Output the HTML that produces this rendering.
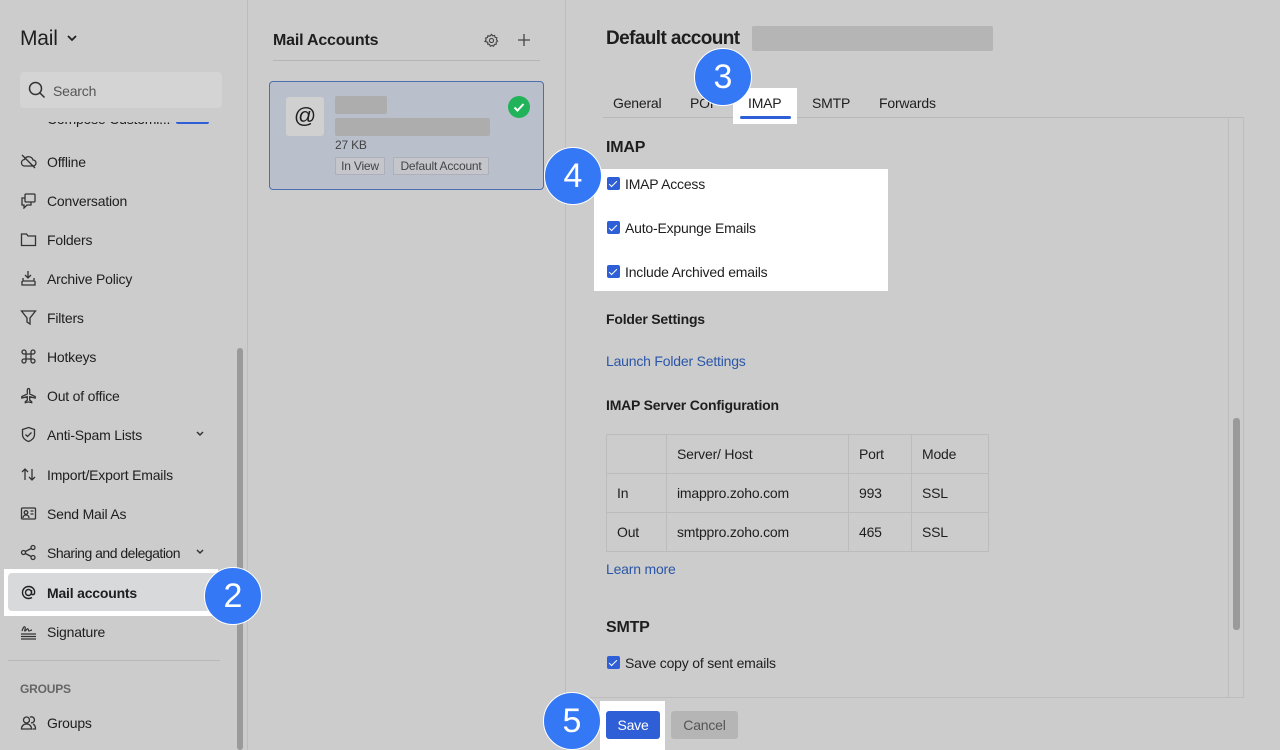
<!DOCTYPE html>
<html><head><style>
*{box-sizing:border-box;margin:0;padding:0}
body{width:1280px;height:750px;background:#cccccc;font-family:"Liberation Sans",sans-serif;color:#1e1e1e;position:relative;overflow:hidden;letter-spacing:-0.2px}
.a{position:absolute}
.t{position:absolute;white-space:nowrap;font-size:14px;line-height:1}
.it{position:absolute;left:0;width:230px;height:39px}
.it svg{position:absolute;left:20px;top:11px}
.it span{position:absolute;left:47px;top:12px;font-size:14px;white-space:nowrap}
.circ{position:absolute;width:58px;height:58px;border-radius:50%;background:#3478f6;border:1.5px solid #fff;color:#fff;font-size:34px;text-align:center;line-height:56px;letter-spacing:0}
.cb{position:absolute;width:13px;height:13px;background:#2f5fd6;border-radius:2px}
.cb:after{content:"";position:absolute;left:4px;top:1.5px;width:3px;height:7px;border:solid #fff;border-width:0 1.6px 1.6px 0;transform:rotate(45deg)}
td{border:1px solid #bcbcbc;font-size:14px;padding-left:10px;height:39px}
</style></head><body>
<!-- sidebar -->
<div class="t" style="left:20px;top:28px;font-size:21px;">Mail</div>
<svg class="a" style="left:66px;top:33px" width="12" height="10" viewBox="0 0 12 10"><path d="M2 3l4 4 4-4" stroke="#222" stroke-width="1.8" fill="none"/></svg>
<div class="a" style="left:20px;top:72px;width:202px;height:36px;background:#d4d4d4;border-radius:4px"></div>
<svg class="a" style="left:28px;top:81px" width="18" height="18" viewBox="0 0 18 18"><circle cx="7.5" cy="7.5" r="6" stroke="#333" stroke-width="1.5" fill="none"/><path d="M12 12l4.5 4.5" stroke="#333" stroke-width="1.5"/></svg>
<div class="t" style="left:53px;top:84px;color:#555">Search</div>
<div class="a" style="left:0;top:122px;width:236px;height:628px;overflow:hidden">
 <div class="it" style="top:-23px"><span>Compose Customi...</span><div class="a" style="left:176px;top:14px;width:33px;height:11px;background:#2f5fd6;border-radius:2px"></div></div>
 <div class="it" style="top:20px"><svg width="17" height="17" viewBox="0 0 17 17" fill="none" stroke="#333" stroke-width="1.3"><path d="M4 13h9a3 3 0 0 0 0-6 4.5 4.5 0 0 0-8.5-.5A3.3 3.3 0 0 0 4 13z"/><path d="M2 2l13 13"/></svg><span>Offline</span></div>
 <div class="it" style="top:59px"><svg width="17" height="17" viewBox="0 0 17 17" fill="none" stroke="#333" stroke-width="1.3"><rect x="5" y="2" width="10" height="8" rx="1"/><path d="M5 6H2v7h2v3l3-3h4v-3"/></svg><span>Conversation</span></div>
 <div class="it" style="top:98px"><svg width="17" height="17" viewBox="0 0 17 17" fill="none" stroke="#333" stroke-width="1.3"><path d="M1.5 3h5l1.5 2h7.5v9.5h-14z"/></svg><span>Folders</span></div>
 <div class="it" style="top:137px"><svg width="17" height="17" viewBox="0 0 17 17" fill="none" stroke="#333" stroke-width="1.3"><path d="M8 1v7M5 5l3 3 3-3M3 8v3h11V8M2 11v4h13v-4"/></svg><span>Archive Policy</span></div>
 <div class="it" style="top:176px"><svg width="17" height="17" viewBox="0 0 17 17" fill="none" stroke="#333" stroke-width="1.3"><path d="M1.5 2h14l-5.5 7v6l-3-2V9z"/></svg><span>Filters</span></div>
 <div class="it" style="top:215px"><svg width="17" height="17" viewBox="0 0 17 17" fill="none" stroke="#333" stroke-width="1.3"><path d="M6 6V4a2 2 0 1 0-2 2h9a2 2 0 1 0-2-2v9a2 2 0 1 0 2-2H4a2 2 0 1 0 2 2z"/></svg><span>Hotkeys</span></div>
 <div class="it" style="top:254px"><svg width="17" height="17" viewBox="0 0 17 17" fill="none" stroke="#333" stroke-width="1.3"><path d="M8.5 1.5c1 0 1.2 1 1.2 2V7l5.5 2.5v1.5l-5.5-1.3v3.5l2 1.5v1l-3.2-.8-3.2.8v-1l2-1.5V9.7l-5.5 1.3V9.5L7.3 7V3.5c0-1 .2-2 1.2-2z"/></svg><span>Out of office</span></div>
 <div class="it" style="top:293px"><svg width="17" height="17" viewBox="0 0 17 17" fill="none" stroke="#333" stroke-width="1.3"><path d="M8.5 1.5l6 2v5c0 3.5-3 6-6 7-3-1-6-3.5-6-7v-5z"/><path d="M5.5 8.5l2 2 4-4"/></svg><span>Anti-Spam Lists</span><svg style="left:195px;top:15px" width="10" height="8" viewBox="0 0 10 8"><path d="M2 2l3 3 3-3" stroke="#333" stroke-width="1.5" fill="none"/></svg></div>
 <div class="it" style="top:333px"><svg width="17" height="17" viewBox="0 0 17 17" fill="none" stroke="#333" stroke-width="1.3"><path d="M5 14V3M2 6l3-3 3 3M12 3v11M9 11l3 3 3-3"/></svg><span>Import/Export Emails</span></div>
 <div class="it" style="top:372px"><svg width="17" height="17" viewBox="0 0 17 17" fill="none" stroke="#333" stroke-width="1.3"><rect x="1.5" y="3" width="14" height="11" rx="1"/><circle cx="6" cy="7.5" r="1.8"/><path d="M3 13c0-2 1.5-3 3-3s3 1 3 3M10.5 6h3M10.5 9h3"/></svg><span>Send Mail As</span></div>
 <div class="it" style="top:411px"><svg width="17" height="17" viewBox="0 0 17 17" fill="none" stroke="#333" stroke-width="1.3"><circle cx="3.5" cy="8.5" r="2"/><circle cx="13" cy="3.5" r="2"/><circle cx="13" cy="13.5" r="2"/><path d="M5.3 7.5l5.9-3M5.3 9.5l5.9 3"/></svg><span style="letter-spacing:-0.5px">Sharing and delegation</span><svg style="left:195px;top:15px" width="10" height="8" viewBox="0 0 10 8"><path d="M2 2l3 3 3-3" stroke="#333" stroke-width="1.5" fill="none"/></svg></div>
 <div class="a" style="left:4px;top:447px;width:214px;height:47px;background:#fff"></div>
 <div class="a" style="left:8px;top:451px;width:212px;height:38px;background:#d8d9db;border-radius:4px"></div>
 <div class="it" style="top:451px"><svg width="17" height="17" viewBox="0 0 17 17" fill="none" stroke="#222" stroke-width="1.4"><circle cx="8.5" cy="8.5" r="3"/><path d="M11.5 6v3.5c0 1.5 2.5 1.5 3 0 .8-4-2-7-6-7a6 6 0 0 0 0 12c1.3 0 2.5-.4 3.5-1"/></svg><span style="font-weight:bold">Mail accounts</span></div>
 <div class="it" style="top:490px"><svg width="17" height="17" viewBox="0 0 17 17" fill="none" stroke="#333" stroke-width="1.2"><path d="M2 8c1-3 2-5 3-4s-1 4 0 4 2-3 3-2 0 2 1 2 2-1 3-1M1 11h15M1 13.5h15M1 16h15"/></svg><span>Signature</span></div>
 <div class="a" style="left:8px;top:538px;width:212px;height:1px;background:#b8b8b8"></div>
 <div class="t" style="left:20px;top:561px;font-size:12px;font-weight:bold;color:#666">GROUPS</div>
 <div class="it" style="top:581px"><svg width="17" height="17" viewBox="0 0 17 17" fill="none" stroke="#333" stroke-width="1.3"><circle cx="6.5" cy="6" r="3"/><path d="M1.5 15c0-3 2-5 5-5s5 2 5 5zM10 3.2a3 3 0 1 1 1 5.6M13 10c1.5.7 2.5 2.5 2.5 5h-3"/></svg><span>Groups</span></div>
</div>
<div class="a" style="left:237px;top:348px;width:6px;height:402px;background:#9a9a9a;border-radius:3px"></div>
<div class="a" style="left:247px;top:0;width:1px;height:750px;background:#bdbdbd"></div>
<div class="circ" style="left:204px;top:567px">2</div>
<!-- middle -->
<div class="t" style="left:273px;top:33px;font-size:16px;font-weight:bold">Mail Accounts</div>
<svg class="a" style="left:484px;top:33px" width="15" height="15" viewBox="0 0 16 16" fill="none" stroke="#444" stroke-width="1.2"><circle cx="8" cy="8" r="2.2"/><path d="M8 1.5l1.3 1.6 2-.5.5 2 2 .6-.6 2 1.3 1.5-1.6 1.2.2 2-2 .3-.8 1.9-1.8-.9-1.8.9-.8-1.9-2-.3.2-2L1 9l1.3-1.5-.6-2 2-.6.5-2 2 .5z"/></svg>
<svg class="a" style="left:517px;top:33px" width="14" height="14" viewBox="0 0 14 14"><path d="M7 1v12M1 7h12" stroke="#444" stroke-width="1.3"/></svg>
<div class="a" style="left:273px;top:60px;width:267px;height:1px;background:#b5b5b5"></div>
<div class="a" style="left:269px;top:81px;width:275px;height:109px;background:#b9bfcb;border:1.5px solid #4d6fb0;border-radius:4px"></div>
<div class="a" style="left:286px;top:97px;width:38px;height:39px;background:#d0d0d0;border-radius:3px;font-size:22px;text-align:center;line-height:37px">@</div>
<div class="a" style="left:335px;top:96px;width:52px;height:18px;background:#adadad;border-radius:2px"></div>
<div class="a" style="left:335px;top:118px;width:155px;height:18px;background:#adadad;border-radius:2px"></div>
<div class="t" style="left:335px;top:139px;font-size:12px;color:#444">27 KB</div>
<div class="a" style="left:335px;top:157px;width:50px;height:18px;background:#c4c6cb;border:1px solid #adb0b8;font-size:12px;color:#444;text-align:center;line-height:16px">In View</div>
<div class="a" style="left:393px;top:157px;width:96px;height:18px;background:#c4c6cb;border:1px solid #adb0b8;font-size:12px;color:#444;text-align:center;line-height:16px">Default Account</div>
<div class="a" style="left:508px;top:96px;width:22px;height:22px;border-radius:50%;background:#21b35a"></div>
<svg class="a" style="left:508px;top:96px" width="22" height="22" viewBox="0 0 22 22"><path d="M6.5 11.5l3 3 6-6.5" stroke="#fff" stroke-width="2" fill="none"/></svg>
<div class="a" style="left:565px;top:0;width:1px;height:750px;background:#bdbdbd"></div>
<!-- right -->
<div class="t" style="left:606px;top:29px;font-size:19px;font-weight:bold;letter-spacing:-0.6px">Default account</div>
<div class="a" style="left:752px;top:26px;width:241px;height:25px;background:#b5b5b5;border-radius:2px"></div>
<div class="a" style="left:603px;top:117px;width:641px;height:1px;background:#b8b8b8"></div>
<div class="a" style="left:733px;top:88px;width:64px;height:36px;background:#fff"></div>
<div class="t" style="left:613px;top:96px">General</div>
<div class="t" style="left:690px;top:96px">POP</div>
<div class="t" style="left:748px;top:96px">IMAP</div>
<div class="t" style="left:812px;top:96px">SMTP</div>
<div class="t" style="left:879px;top:96px">Forwards</div>
<div class="a" style="left:740px;top:116px;width:51px;height:3px;background:#2f5fd6;border-radius:2px"></div>
<div class="circ" style="left:694px;top:48px">3</div>
<div class="a" style="left:1228px;top:117px;width:1px;height:580px;background:#bdbdbd"></div>
<div class="a" style="left:1243px;top:117px;width:1px;height:580px;background:#bdbdbd"></div>
<div class="a" style="left:1233px;top:418px;width:7px;height:212px;background:#9a9a9a;border-radius:3px"></div>
<div class="t" style="left:606px;top:140px;font-size:16px;font-weight:bold">IMAP</div>
<div class="a" style="left:594px;top:169px;width:294px;height:122px;background:#fff"></div>
<div class="cb" style="left:607px;top:177px"></div><div class="t" style="left:625px;top:177px">IMAP Access</div>
<div class="cb" style="left:607px;top:221px"></div><div class="t" style="left:625px;top:221px">Auto-Expunge Emails</div>
<div class="cb" style="left:607px;top:265px"></div><div class="t" style="left:625px;top:265px">Include Archived emails</div>
<div class="circ" style="left:544px;top:147px">4</div>
<div class="t" style="left:606px;top:312px;font-weight:bold">Folder Settings</div>
<div class="t" style="left:606px;top:354px;color:#2b56a8">Launch Folder Settings</div>
<div class="t" style="left:606px;top:398px;font-weight:bold">IMAP Server Configuration</div>
<table class="a" style="left:606px;top:434px;border-collapse:collapse;width:383px">
<tr><td style="width:60px"></td><td style="width:182px">Server/ Host</td><td style="width:63px">Port</td><td>Mode</td></tr>
<tr><td>In</td><td>imappro.zoho.com</td><td>993</td><td>SSL</td></tr>
<tr><td>Out</td><td>smtppro.zoho.com</td><td>465</td><td>SSL</td></tr>
</table>
<div class="t" style="left:606px;top:562px;color:#2b56a8">Learn more</div>
<div class="t" style="left:606px;top:620px;font-size:16px;font-weight:bold">SMTP</div>
<div class="cb" style="left:607px;top:656px"></div><div class="t" style="left:625px;top:656px">Save copy of sent emails</div>
<div class="a" style="left:585px;top:697px;width:659px;height:1px;background:#bdbdbd"></div>
<div class="a" style="left:600px;top:701px;width:65px;height:49px;background:#fff"></div>
<div class="a" style="left:606px;top:711px;width:54px;height:28px;background:#2f5fd6;border-radius:3px;color:#fff;font-size:14px;text-align:center;line-height:28px">Save</div>
<div class="a" style="left:671px;top:711px;width:67px;height:28px;background:#b5b5b5;border-radius:3px;color:#555;font-size:14px;text-align:center;line-height:28px">Cancel</div>
<div class="circ" style="left:543px;top:692px">5</div>
</body></html>
